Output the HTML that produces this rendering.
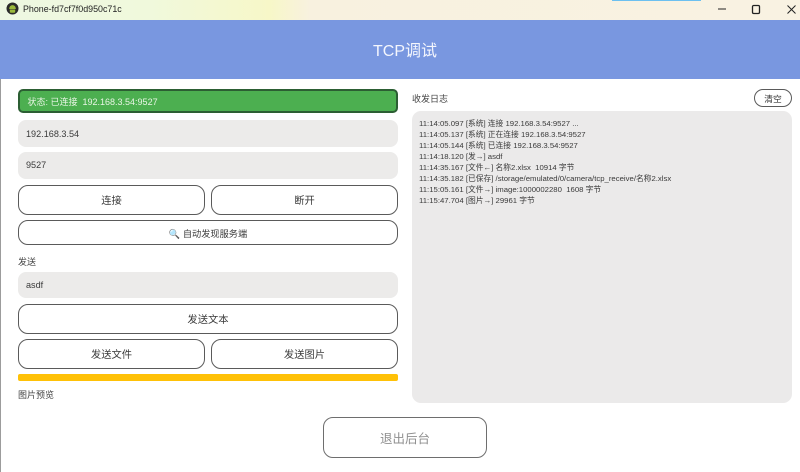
<!DOCTYPE html>
<html><head><meta charset="utf-8">
<style>
*{box-sizing:border-box;margin:0;padding:0}
html,body{width:800px;height:472px;overflow:hidden;background:#fff}
body{position:relative;font-family:"Liberation Sans","Noto Sans CJK SC",sans-serif;color:#333}
.a{position:absolute}
.in{position:absolute;left:18px;width:380px;background:#ecebea;border-radius:8px;font-size:9.1px;padding-left:8px;display:flex;align-items:center;color:#3a3a3a}
.b{position:absolute;background:#fff;border:1.5px solid #5a5a5a;border-radius:10px;display:flex;align-items:center;justify-content:center;font-size:10.3px;color:#3a3a3a;padding-bottom:2px}
.l{position:absolute;font-size:9px;color:#444;line-height:12px;white-space:nowrap}
</style></head><body>
<div class="a" style="left:0;top:0;width:800px;height:20px;background:linear-gradient(90deg,#eef8e2 0,#f0f9dc 150px,#f7f7c8 270px,#f8f1df 310px,#f9f2e2 800px)"></div>
<div class="a" style="left:612px;top:0;width:89px;height:1px;background:#6cc0f0"></div>
<svg class="a" style="left:6px;top:2px" width="14" height="14" viewBox="0 0 14 14"><circle cx="6.500" cy="6.500" r="6" fill="#2b2b2b"/><path d="M3.200 7h6.600v-.6A3.300 3.300 0 0 0 3.200 6.400zM3.800 7.500h5.400v2.200a1 1 0 0 1-1 1H4.800a1 1 0 0 1-1-1z" fill="#9ab93b"/></svg>
<div class="a" style="left:23px;top:3px;font-size:8.9px;line-height:12px;color:#222;white-space:nowrap">Phone-fd7cf7f0d950c71c</div>
<svg class="a" style="left:715px;top:3px" width="85" height="14" viewBox="0 0 85 14" fill="none" stroke="#222"><path d="M3 6h8" stroke-width="1"/><rect x="37.500" y="2.500" width="7" height="8" rx="1.200" stroke-width="1.300"/><path d="M72.500 2.500l8 8M80.500 2.500l-8 8" stroke-width="1"/></svg>

<div class="a" style="left:0;top:20px;width:800px;height:59px;background:#7997e0;color:#f4f6fd;font-size:16px;display:flex;align-items:center;justify-content:center;padding:0 0 2px 10px">TCP调试</div>
<div class="a" style="left:0;top:79px;width:1px;height:393px;background:#9c9c9c"></div>

<div class="a" style="left:18px;top:89px;width:380px;height:24px;background:#4caf50;border:2px solid #2c5e33;border-radius:5px;color:#e8f5e4;font-size:9px;display:flex;align-items:center;padding-left:7.500px;white-space:pre">状态: 已连接  192.168.3.54:9527</div>
<div class="in" style="top:120px;height:27px">192.168.3.54</div>
<div class="in" style="top:152px;height:27px;padding-bottom:1px">9527</div>
<div class="b" style="left:18px;top:185px;width:187px;height:30px">连接</div>
<div class="b" style="left:211px;top:185px;width:187px;height:30px">断开</div>
<div class="b" style="left:18px;top:220px;width:380px;height:25px;font-size:9.200px;padding-bottom:0">🔍 自动发现服务端</div>
<div class="l" style="left:18px;top:256px">发送</div>
<div class="in" style="top:272px;height:26px">asdf</div>
<div class="b" style="left:18px;top:304px;width:380px;height:30px">发送文本</div>
<div class="b" style="left:18px;top:339px;width:187px;height:30px">发送文件</div>
<div class="b" style="left:211px;top:339px;width:187px;height:30px">发送图片</div>
<div class="a" style="left:18px;top:374px;width:380px;height:7px;background:#ffc107;border-radius:2px"></div>
<div class="l" style="left:18px;top:389px">图片预览</div>

<div class="l" style="left:412px;top:93px">收发日志</div>
<div class="b" style="left:754px;top:89px;width:38px;height:18px;border-radius:9px;font-size:8.800px;padding-bottom:0">清空</div>
<div class="a" style="left:412px;top:111px;width:380px;height:292px;background:#ebeaea;border-radius:9px"></div>
<div class="a" style="left:419px;top:118px;font-size:7.750px;line-height:11px;color:#3a3a3a;white-space:pre">11:14:05.097 [系统] 连接 192.168.3.54:9527 ...
11:14:05.137 [系统] 正在连接 192.168.3.54:9527
11:14:05.144 [系统] 已连接 192.168.3.54:9527
11:14:18.120 [发→] asdf
11:14:35.167 [文件←] 名称2.xlsx  10914 字节
11:14:35.182 [已保存] /storage/emulated/0/camera/tcp_receive/名称2.xlsx
11:15:05.161 [文件→] image:1000002280  1608 字节
11:15:47.704 [图片→] 29961 字节</div>

<div class="b" style="left:323px;top:417px;width:164px;height:41px;font-size:12.500px;color:#8f8f8f;border-color:#6e6e6e;padding-bottom:0">退出后台</div>
</body></html>
